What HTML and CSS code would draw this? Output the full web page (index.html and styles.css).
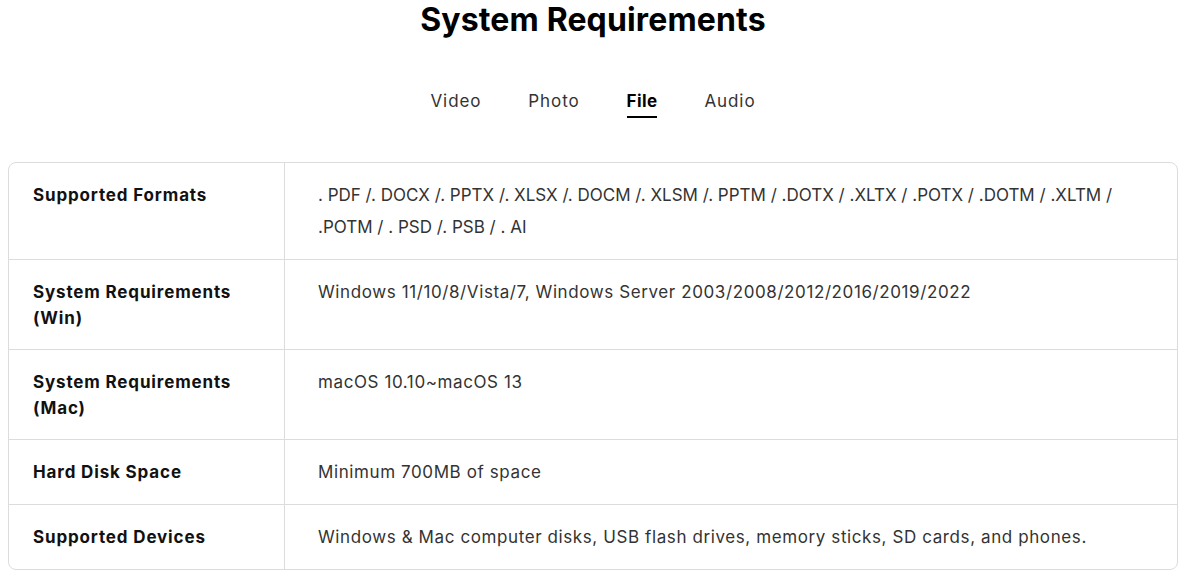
FILE: index.html
```html
<!DOCTYPE html>
<html lang="en">
<head>
<meta charset="utf-8">
<title>System Requirements</title>
<link rel="stylesheet" href="styles.css">
</head>
<body>
<main class="page">
  <h1 class="title">System Requirements</h1>
  <nav class="tabs">
    <span class="tab">Video</span>
    <span class="tab">Photo</span>
    <span class="tab tab-active">File</span>
    <span class="tab">Audio</span>
  </nav>
  <div class="spec">
    <div class="row">
      <div class="label">Supported Formats</div>
      <div class="value value-caps">. PDF /. DOCX /. PPTX /. XLSX /. DOCM /. XLSM /. PPTM / .DOTX / .XLTX / .POTX / .DOTM / .XLTM / .POTM / . PSD /. PSB / . AI</div>
    </div>
    <div class="row">
      <div class="label">System Requirements (Win)</div>
      <div class="value">Windows 11/10/8/Vista/7, Windows Server 2003/2008/2012/2016/2019/2022</div>
    </div>
    <div class="row">
      <div class="label">System Requirements (Mac)</div>
      <div class="value">macOS 10.10~macOS 13</div>
    </div>
    <div class="row">
      <div class="label">Hard Disk Space</div>
      <div class="value">Minimum 700MB of space</div>
    </div>
    <div class="row">
      <div class="label">Supported Devices</div>
      <div class="value">Windows &amp; Mac computer disks, USB flash drives, memory sticks, SD cards, and phones.</div>
    </div>
  </div>
</main>
</body>
</html>
```
FILE: styles.css
```css
* { box-sizing: border-box; }
html, body { margin: 0; padding: 0; background: #fff; }
body {
  font-family: Inter, "Open Sans", "DejaVu Sans", sans-serif;
  color: #222;
}
.page {
  padding: 0 8px;
}
.title {
  margin: 0;
  text-align: center;
  font-size: 32px;
  line-height: 40px;
  font-weight: 700;
  color: #000;
  letter-spacing: 0.15px;
}
.tabs {
  margin-top: 48px;
  display: flex;
  justify-content: center;
  gap: 47px;
}
.tab {
  font-size: 17px;
  line-height: 26px;
  color: #333;
  letter-spacing: 0.9px;
  padding-bottom: 2px;
  border-bottom: 2px solid transparent;
}
.tab-active {
  font-weight: 700;
  color: #000;
  letter-spacing: 0.4px;
  border-bottom-color: #000;
}
.spec {
  margin-top: 44px;
  border: 1px solid #dcdcdc;
  border-radius: 8px;
  overflow: hidden;
}
.row {
  display: grid;
  grid-template-columns: 276px 1fr;
}
.row + .row {
  border-top: 1px solid #dcdcdc;
}
.label {
  padding: 19px 34px 18px 24px;
  font-size: 17px;
  line-height: 26px;
  font-weight: 700;
  color: #111;
  letter-spacing: 0.85px;
  border-right: 1px solid #dcdcdc;
}
.value {
  padding: 16px 33px 16px 33px;
  font-size: 17px;
  line-height: 32px;
  color: #333;
  letter-spacing: 0.6px;
}
.value-caps {
  letter-spacing: 0;
}
```
